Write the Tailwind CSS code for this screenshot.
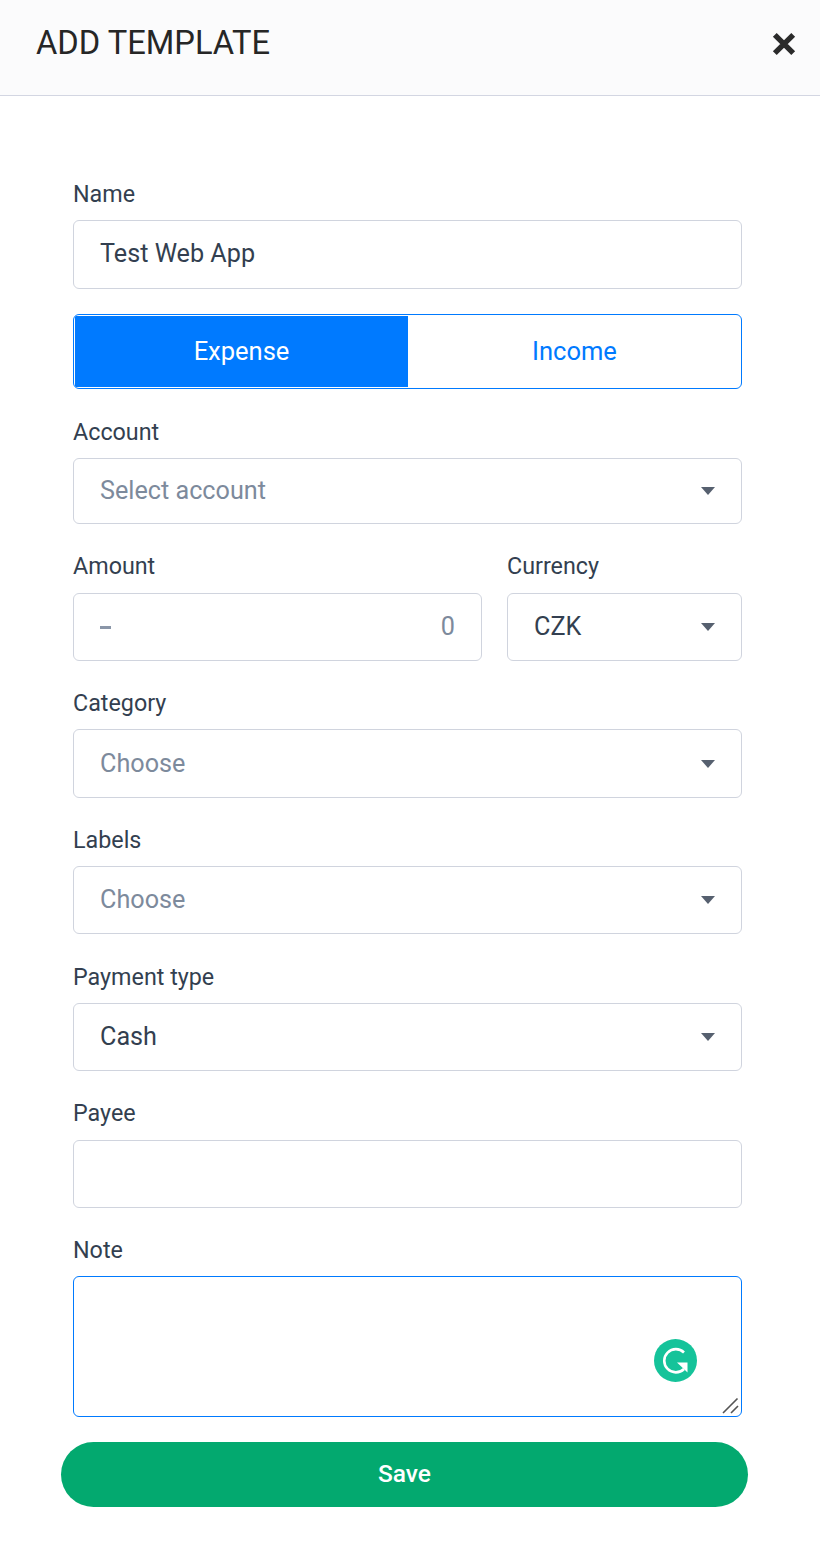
<!DOCTYPE html>
<html lang="en">
  <head>
    <meta charset="UTF-8" />
    <title>Add template</title>
    <script src="https://cdn.jsdelivr.net/npm/@tailwindcss/browser@4"></script>
  </head>
  <body class="bg-white font-['Roboto',sans-serif] text-[#333f50] overflow-hidden">
    <!-- Header -->
    <header class="h-[96px] bg-[#fbfbfc] border-b border-[#d3d6e2] pl-[36px] pr-[24px] flex items-center justify-between">
      <h1 class="text-[32.7px] leading-none text-[#262626] pb-[9px]">ADD TEMPLATE</h1>
      <svg class="w-[26px] h-[26px] mb-[8px] mr-[-1px]" viewBox="0 0 24 24">
        <path d="M3.5 3.5 L20.5 20.5 M20.5 3.5 L3.5 20.5" stroke="#2b2b2b" stroke-width="5" fill="none" />
      </svg>
    </header>

    <main class="pl-[73px] pr-[78px] pt-[84px]">
      <!-- Name -->
      <label class="block text-[23.3px] leading-[28px] h-[40px]">Name</label>
      <div class="h-[69px] border border-[#d0d4de] rounded-[6px] px-[26px] pb-[2px] flex items-center text-[25.2px]">Test Web App</div>

      <!-- Expense / Income -->
      <div class="mt-[25px] h-[75px] border border-[#007aff] rounded-[6px] flex overflow-hidden text-[25.5px]">
        <div class="w-1/2 my-px ml-px bg-[#007aff] text-white flex items-center justify-center">Expense</div>
        <div class="w-1/2 text-[#007aff] flex items-center justify-center">Income</div>
      </div>

      <!-- Account -->
      <label class="block mt-[29px] text-[23.3px] leading-[28px] h-[40px]">Account</label>
      <div class="h-[66px] border border-[#d0d4de] rounded-[6px] pl-[26px] pr-[26px] flex items-center justify-between text-[25.2px] text-[#7d8a9c]">
        Select account
        <svg class="w-[14px] h-[8px]" viewBox="0 0 14 8"><path d="M0 0 H14 L7 8 Z" fill="#56606f" /></svg>
      </div>

      <!-- Amount / Currency -->
      <div class="mt-[28px] flex gap-[25px]">
        <div class="w-[409px]">
          <label class="block text-[23.3px] leading-[28px] h-[41px]">Amount</label>
          <div class="h-[68px] border border-[#d0d4de] rounded-[6px] px-[26px] flex items-center justify-between text-[25.2px] text-[#7d8a9c]">
            <span class="w-[11px] h-[3px] bg-[#8a96a8]"></span>
            0
          </div>
        </div>
        <div class="w-[235px]">
          <label class="block text-[23.3px] leading-[28px] h-[41px]">Currency</label>
          <div class="h-[68px] border border-[#d0d4de] rounded-[6px] pl-[26px] pr-[26px] flex items-center justify-between text-[25.2px]">
            CZK
            <svg class="w-[14px] h-[8px]" viewBox="0 0 14 8"><path d="M0 0 H14 L7 8 Z" fill="#56606f" /></svg>
          </div>
        </div>
      </div>

      <!-- Category -->
      <label class="block mt-[28px] text-[23.3px] leading-[28px] h-[40px]">Category</label>
      <div class="h-[69px] border border-[#d0d4de] rounded-[6px] pl-[26px] pr-[26px] flex items-center justify-between text-[25.2px] text-[#7d8a9c]">
        Choose
        <svg class="w-[14px] h-[8px]" viewBox="0 0 14 8"><path d="M0 0 H14 L7 8 Z" fill="#56606f" /></svg>
      </div>

      <!-- Labels -->
      <label class="block mt-[28px] text-[23.3px] leading-[28px] h-[40px]">Labels</label>
      <div class="h-[68px] border border-[#d0d4de] rounded-[6px] pl-[26px] pr-[26px] flex items-center justify-between text-[25.2px] text-[#7d8a9c]">
        Choose
        <svg class="w-[14px] h-[8px]" viewBox="0 0 14 8"><path d="M0 0 H14 L7 8 Z" fill="#56606f" /></svg>
      </div>

      <!-- Payment type -->
      <label class="block mt-[28px] text-[23.3px] leading-[30px] h-[41px]">Payment type</label>
      <div class="h-[68px] border border-[#d0d4de] rounded-[6px] pl-[26px] pr-[26px] flex items-center justify-between text-[25.2px]">
        Cash
        <svg class="w-[14px] h-[8px]" viewBox="0 0 14 8"><path d="M0 0 H14 L7 8 Z" fill="#56606f" /></svg>
      </div>

      <!-- Payee -->
      <label class="block mt-[28px] text-[23.3px] leading-[28px] h-[41px]">Payee</label>
      <div class="h-[68px] border border-[#d0d4de] rounded-[6px]"></div>

      <!-- Note -->
      <label class="block mt-[28px] text-[23.3px] leading-[28px] h-[40px]">Note</label>
      <div class="relative h-[141px] border border-[#007aff] rounded-[6px]">
        <svg class="absolute left-[580px] top-[62px] w-[43px] h-[43px]" viewBox="0 0 43 43">
          <circle cx="21.5" cy="21.5" r="21.5" fill="#15c39a" />
          <path d="M30 13.5 A11.6 11.6 0 1 0 30 30" stroke="#fff" stroke-width="2.6" fill="none" />
          <path d="M23 23.5 H33.5 V33.5 Z" fill="#fff" />
        </svg>
        <svg class="absolute right-[2px] bottom-[2px] w-[18px] h-[18px]" viewBox="0 0 18 18">
          <path d="M2 17 L16.5 2.5 M10 17 L17 10" stroke="#555555" stroke-width="1.6" fill="none" />
        </svg>
      </div>
    </main>

    <!-- Save -->
    <div class="pl-[61px] mt-[25px]">
      <button class="w-[687px] h-[65px] rounded-full bg-[#03a96f] text-white text-[24.5px] font-medium">Save</button>
    </div>
  </body>
</html>
